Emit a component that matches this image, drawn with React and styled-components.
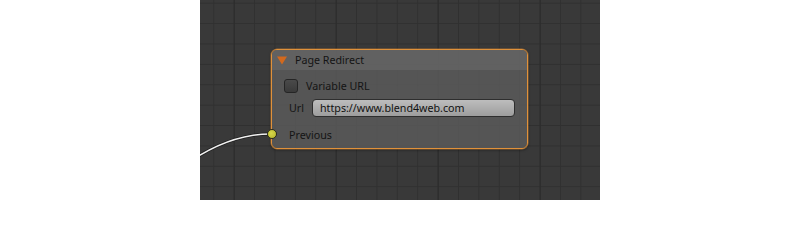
import React from "react";
import styled, { createGlobalStyle } from "styled-components";

const GlobalStyle = createGlobalStyle`
  html, body {
    margin: 0;
    padding: 0;
    background: #ffffff;
  }
  body {
    font-family: "Noto Sans", "DejaVu Sans", sans-serif;
  }
`;

const Page = styled.div`
  display: flex;
  width: 800px;
  height: 200px;
`;

const Blank = styled.div`
  width: 200px;
  height: 100%;
  background: #ffffff;
`;

const Canvas = styled.div`
  position: relative;
  width: 400px;
  height: 100%;
  overflow: hidden;
  background-color: #393939;
  background-image:
    linear-gradient(to right, #2b2b2b 1px, transparent 1px),
    linear-gradient(to right, #303030 1px, transparent 1px),
    linear-gradient(to bottom, #303030 1px, transparent 1px);
  background-size: 102px 102px, 20.4px 20.4px, 20.4px 20.4px;
  background-position: 135.7px 0, 13.3px 0, 0 2.7px;
`;

const Wires = styled.svg`
  position: absolute;
  left: 0;
  top: 0;
`;

const Node = styled.div`
  position: absolute;
  left: ${(p) => p.x}px;
  top: ${(p) => p.y}px;
  width: ${(p) => p.w}px;
  height: ${(p) => p.h}px;
  box-sizing: border-box;
  border: 1px solid #e0913a;
  border-radius: 6px;
  background: rgba(92, 92, 92, 0.82);
  background-clip: padding-box;
  box-shadow: 0 0 0 0.5px rgba(224, 145, 58, 0.6), 0 1px 3px rgba(0, 0, 0, 0.45);
  color: #141414;
  font-size: 10.7px;
`;

const Header = styled.div`
  display: flex;
  align-items: center;
  gap: 8px;
  height: 20px;
  padding-left: 5px;
  border-radius: 5px 5px 0 0;
  background: rgba(100, 100, 100, 0.8);
`;

const Collapse = styled.svg`
  flex: none;
`;

const Body = styled.div`
  display: flex;
  flex-direction: column;
  padding: 9px 12px 0 12px;
`;

const Row = styled.div`
  display: flex;
  align-items: center;
  gap: ${(p) => p.gap || 8}px;
  height: ${(p) => p.h}px;
  margin-top: ${(p) => p.mt || 0}px;
  padding-left: ${(p) => p.indent || 0}px;
`;

const Check = styled.div`
  flex: none;
  width: 14px;
  height: 14px;
  box-sizing: border-box;
  border: 1px solid #252525;
  border-radius: 3px;
  background: linear-gradient(#4a4a4a, #3a3a3a);
`;

const Field = styled.div`
  flex: 1;
  display: flex;
  align-items: center;
  height: 18px;
  box-sizing: border-box;
  padding-left: 7px;
  border: 1px solid #2e2e2e;
  border-radius: 4px;
  background: linear-gradient(#bdbdbd, #9d9d9d);
  color: #111111;
`;

const Socket = styled.div`
  position: absolute;
  left: -5px;
  top: ${(p) => p.y}px;
  width: 10px;
  height: 10px;
  box-sizing: border-box;
  border: 1px solid #2b2b1a;
  border-radius: 50%;
  background: radial-gradient(circle at 40% 40%, #d8d84a, #b5b52a);
`;

export default function App() {
  return (
    <>
      <GlobalStyle />
      <Page>
        <Blank />
        <Canvas>
          <Wires width="400" height="200">
            <path
              d="M -20 168.8 Q 25.5 134 71 134"
              fill="none"
              stroke="#1e1e1e"
              strokeWidth="3.2"
            />
            <path
              d="M -20 168.8 Q 25.5 134 71 134"
              fill="none"
              stroke="#f2f2f2"
              strokeWidth="1.6"
            />
          </Wires>
          <Node x={71} y={49} w={257} h={100}>
            <Header>
              <Collapse width="10" height="9" viewBox="0 0 10 9">
                <path d="M0 0.5 L10 0.5 L5 8.5 Z" fill="#d2691e" />
              </Collapse>
              <span>Page Redirect</span>
            </Header>
            <Body>
              <Row h={14} gap={8}>
                <Check />
                <span>Variable URL</span>
              </Row>
              <Row h={18} mt={6} indent={5} gap={8}>
                <span>Url</span>
                <Field>https://www.blend4web.com</Field>
              </Row>
              <Row h={17} mt={9} indent={5}>
                <span>Previous</span>
              </Row>
            </Body>
            <Socket y={79} />
          </Node>
        </Canvas>
        <Blank />
      </Page>
    </>
  );
}
